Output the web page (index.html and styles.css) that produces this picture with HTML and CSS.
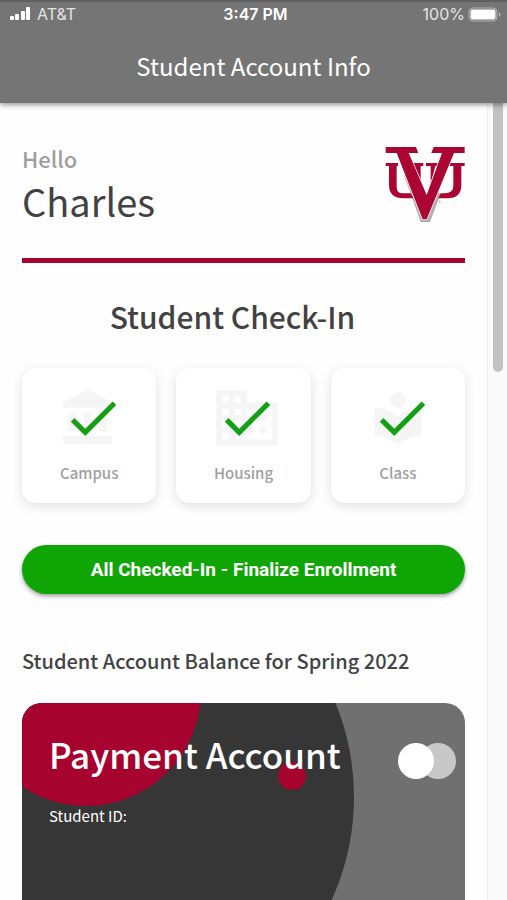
FILE: index.html
```html
<!DOCTYPE html>
<html lang="en">

<head>
    <meta charset="UTF-8">
    <meta name="viewport" content="width=device-width, initial-scale=1.0">
    <title>Student Account Info</title>
    <link rel="stylesheet" href="styles.css">
</head>

<body>
    <header class="app-bar">
        <div class="status">
            <div class="status-left">
                <svg class="signal" viewBox="0 0 21 14" aria-hidden="true">
                    <rect x="0" y="9" width="4" height="4" rx="1" />
                    <rect x="5" y="7" width="4" height="6" rx="1" />
                    <rect x="11" y="4" width="4" height="9" rx="1" />
                    <rect x="16" y="0" width="4" height="13" rx="1" />
                </svg>
                <span>AT&amp;T</span>
            </div>
            <span class="clock">3:47 PM</span>
            <div class="status-right">
                <span>100%</span>
                <svg class="battery" viewBox="0 0 33 15" aria-hidden="true">
                    <rect class="battery-case" x="1" y="1" width="28" height="13" rx="4" />
                    <rect x="2.5" y="2.5" width="25" height="10" rx="2" />
                    <path class="battery-tip" d="M31 5c2 1 2 4 0 5z" />
                </svg>
            </div>
        </div>
        <h1 class="app-title">Student Account Info</h1>
    </header>

    <div class="screen">
        <main class="content">
            <section class="greeting">
                <div>
                    <p class="hello">Hello</p>
                    <p class="name">Charles</p>
                </div>
                <svg class="logo" viewBox="45 45 240 234" role="img" aria-label="VUU">
                    <path class="logo-shade" d="M100 130l52 146h28l32-84-12-10-34 76z" />
                    <path class="logo-red" d="M47 99h37v9h-4v64q0 18 18 18h24l8 15h-28q-45 0-45-40v-57h-10z" />
                    <path class="logo-red" d="M118 99h42v9h-8v54l-20-34v-20h-14z" />
                    <path class="logo-red" d="M168 99h42v9h-14l-14 54v-54h-14z" />
                    <path class="logo-red" d="M240 99h44v9h-10v57q0 40-42 40h-27l7-15h12q26 0 26-22v-60h-10z" />
                    <path class="logo-edge" d="M47 51h91l7 18h-29l54 126 46-126h-32l7-18h93v18h-32l-82 199h-12l-78-199h-33z" />
                    <circle class="logo-mark" cx="209" cy="215" r="3" />
                </svg>
            </section>

            <section class="checkin">
                <h2 class="checkin-title">Student Check-In</h2>
                <div class="tiles">
                    <div class="tile">
                        <div class="tile-icon">
                            <svg class="icon" viewBox="0 0 24 24" aria-hidden="true">
                                <path d="M4 10v7h3v-7H4zm6 0v7h3v-7h-3zM2 22h19v-3H2v3zm14-12v7h3v-7h-3zm-4.5-9L2 6v2h19V6l-9.5-5z" />
                            </svg>
                            <svg class="check" viewBox="0 0 24 24" aria-hidden="true">
                                <path d="M9 16.17L4.83 12l-1.42 1.41L9 19 21 7l-1.41-1.41z" />
                            </svg>
                        </div>
                        <span class="tile-label">Campus</span>
                    </div>
                    <div class="tile">
                        <div class="tile-icon">
                            <svg class="icon icon-wide" viewBox="0 0 24 24" aria-hidden="true">
                                <path d="M12 7V3H2v18h20V7H12zM6 19H4v-2h2v2zm0-4H4v-2h2v2zm0-4H4V9h2v2zm0-4H4V5h2v2zm4 12H8v-2h2v2zm0-4H8v-2h2v2zm0-4H8V9h2v2zm0-4H8V5h2v2zm10 12h-8v-2h2v-2h-2v-2h2v-2h-2V9h8v10zm-2-8h-2v2h2v-2zm0 4h-2v2h2v-2z" />
                            </svg>
                            <svg class="check" viewBox="0 0 24 24" aria-hidden="true">
                                <path d="M9 16.17L4.83 12l-1.42 1.41L9 19 21 7l-1.41-1.41z" />
                            </svg>
                        </div>
                        <span class="tile-label">Housing</span>
                    </div>
                    <div class="tile">
                        <div class="tile-icon">
                            <svg class="icon" viewBox="0 0 24 24" aria-hidden="true">
                                <path d="M12 11.55C9.64 9.35 6.48 8 3 8v11c3.48 0 6.64 1.35 9 3.55 2.36-2.19 5.52-3.55 9-3.55V8c-3.48 0-6.64 1.35-9 3.55zM12 8c1.66 0 3-1.34 3-3s-1.34-3-3-3-3 1.34-3 3 1.34 3 3 3z" />
                            </svg>
                            <svg class="check" viewBox="0 0 24 24" aria-hidden="true">
                                <path d="M9 16.17L4.83 12l-1.42 1.41L9 19 21 7l-1.41-1.41z" />
                            </svg>
                        </div>
                        <span class="tile-label">Class</span>
                    </div>
                </div>
                <button class="finalize" type="button">All Checked-In - Finalize Enrollment</button>
            </section>

            <section class="balance">
                <h2 class="balance-title">Student Account Balance for Spring 2022</h2>
                <div class="card">
                    <svg class="card-art" aria-hidden="true">
                        <circle cx="84" cy="94" r="248" fill="#363636" />
                        <circle cx="64" cy="-12" r="115" fill="#a6032f" />
                        <circle cx="270" cy="73" r="14" fill="#a6032f" />
                    </svg>
                    <div class="card-head">
                        <h3 class="card-title">Payment Account</h3>
                        <svg class="card-brand" viewBox="0 0 58 36" aria-hidden="true">
                            <circle cx="40" cy="18" r="18" fill="#c8c8c8" />
                            <circle cx="18" cy="18" r="18" fill="#fff" />
                        </svg>
                    </div>
                    <p class="card-id">Student ID:</p>
                </div>
            </section>
        </main>
        <div class="scroll-track" aria-hidden="true">
            <div class="scroll-thumb"></div>
        </div>
    </div>
</body>

</html>
```

FILE: styles.css
```css
* {
    box-sizing: border-box;
}

body {
    display: flex;
    flex-direction: column;
    height: 100vh;
    margin: 0;
    overflow: hidden;
    background-color: #fefefe;
    color: #424242;
    font-family: "Noto Sans CJK SC", "Noto Sans", sans-serif;
}

h1,
h2,
h3,
p {
    margin: 0;
}

/* top bar */
.app-bar {
    position: relative;
    z-index: 1;
    flex: none;
    padding-bottom: 20px;
    border-top: 2px solid #606060;
    background-color: #757575;
    color: white;
    box-shadow: 0 2px 5px rgba(0, 0, 0, 0.4);
}

.status {
    display: grid;
    grid-template-columns: 1fr auto 1fr;
    align-items: center;
    padding: 2px 6px 0 10px;
    font-family: Inter, sans-serif;
    font-size: 16px;
    line-height: 20px;
    color: #e4e4e4;
}

.status-left,
.status-right {
    display: flex;
    align-items: center;
    gap: 6px;
}

.status-right {
    justify-content: flex-end;
    gap: 3px;
}

.clock {
    color: white;
    font-weight: 600;
}

.signal {
    width: 21px;
    height: 14px;
    fill: white;
}

.battery {
    width: 33px;
    height: 15px;
    fill: white;
}

.battery-case {
    fill: none;
    stroke: #b4b4b4;
}

.battery-tip {
    fill: #b4b4b4;
}

.app-title {
    margin-top: 24px;
    font-size: 24px;
    font-weight: 400;
    line-height: 35px;
    text-align: center;
}

/* page */
.screen {
    display: flex;
    flex: 1;
    min-height: 0;
}

.content {
    flex: 1;
    padding: 42px 22px 0;
    overflow: hidden;
}

.scroll-track {
    flex: none;
    width: 20px;
    padding: 0 4px 0 5px;
    border-left: 1px solid #eeeeee;
    background-color: #fafafa;
}

.scroll-thumb {
    height: 269px;
    border-radius: 0 0 6px 6px;
    background-color: #c2c2c2;
}

.greeting {
    display: flex;
    justify-content: space-between;
    padding-bottom: 28px;
    border-bottom: 5px solid #a6032f;
}

.hello {
    color: #9e9e9e;
    font-size: 22px;
    font-weight: 500;
    line-height: 27px;
}

.name {
    font-size: 38px;
    line-height: 58px;
}

.logo {
    width: 80px;
    height: 78px;
}

.logo-red {
    fill: #ab0534;
}

.logo-shade {
    fill: #b3aeb0;
}

.logo-edge {
    fill: #ab0534;
    stroke: white;
    stroke-width: 4;
    paint-order: stroke;
}

.logo-mark {
    fill: #d9a0ae;
}

.checkin-title {
    margin: 30px 0 29px;
    padding-right: 22px;
    font-size: 30px;
    font-weight: 500;
    line-height: 46px;
    text-align: center;
}

.tiles {
    display: grid;
    grid-template-columns: repeat(3, 1fr);
    gap: 20px;
}

.tile {
    display: flex;
    flex-direction: column;
    align-items: center;
    padding: 12px 0 18px;
    border-radius: 14px;
    background-color: white;
    box-shadow: 0 3px 12px rgba(0, 0, 0, 0.12);
}

.tile-icon {
    display: grid;
    place-items: center;
    height: 75px;
}

.icon,
.check {
    grid-area: 1 / 1;
    width: 62px;
    height: 62px;
    fill: #f5f5f5;
}

.icon-wide {
    width: 74px;
    height: 74px;
    margin-left: 8px;
}

.check {
    margin-left: 8px;
    fill: #14a014;
}

.tile-label {
    margin-top: 6px;
    color: #9e9e9e;
    font-size: 15px;
    font-weight: 500;
    line-height: 24px;
}

.finalize {
    display: block;
    width: 100%;
    height: 49px;
    margin-top: 42px;
    border: none;
    border-radius: 25px;
    background-color: #0fa605;
    color: white;
    font-family: Roboto, sans-serif;
    font-size: 19px;
    font-weight: 700;
    box-shadow: 0 2px 4px rgba(0, 0, 0, 0.4);
    cursor: pointer;
}

.balance-title {
    margin: 52px 0 27px;
    font-size: 20px;
    font-weight: 500;
    line-height: 30px;
}

/* payment card */
.card {
    position: relative;
    height: 280px;
    padding: 26px 9px 26px 27px;
    overflow: hidden;
    border-radius: 20px;
    background-color: #707070;
    color: white;
}

.card-art {
    position: absolute;
    top: 0;
    left: 0;
    width: 100%;
    height: 100%;
}

.card-head {
    position: relative;
    display: flex;
    align-items: flex-end;
    justify-content: space-between;
}

.card-title {
    font-size: 35px;
    font-weight: 500;
    line-height: 50px;
}

.card-brand {
    width: 58px;
    height: 36px;
}

.card-id {
    position: relative;
    margin-top: 25px;
    font-size: 15px;
    line-height: 24px;
}
```
